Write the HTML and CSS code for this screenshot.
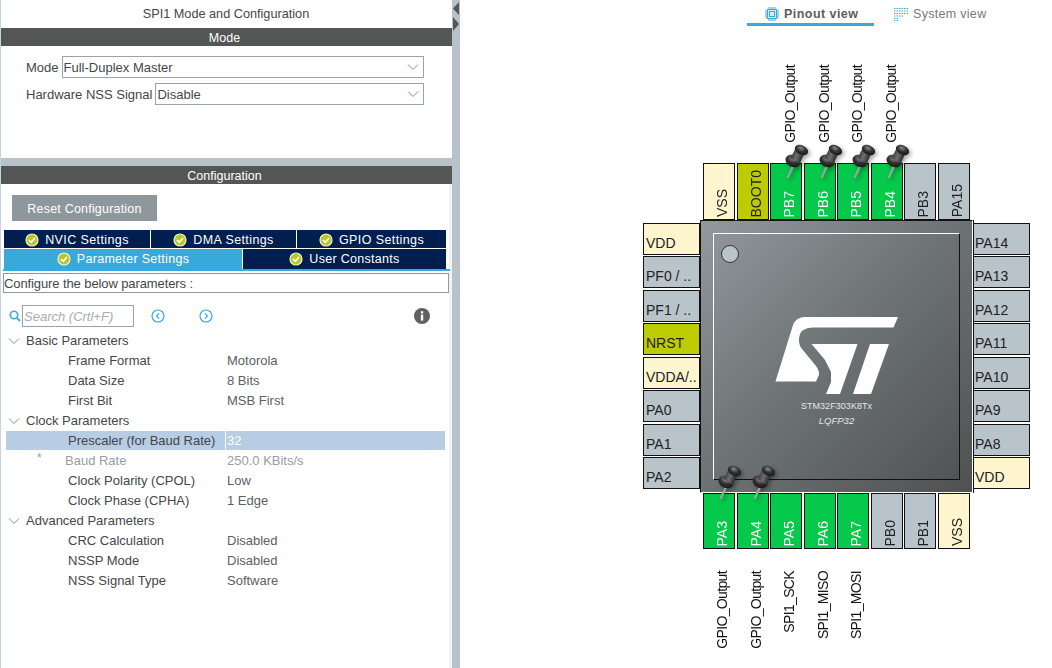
FILE: index.html
```html
<!DOCTYPE html>
<html lang="en">
<head>
    <meta charset="UTF-8">
    <title>SPI1 Mode and Configuration</title>
    <link rel="stylesheet" href="styles.css">
</head>
<body>
<svg class="defs" width="0" height="0">
    <defs>
        <radialGradient id="pinGrad" cx="0.4" cy="0.35" r="0.75">
            <stop offset="0" stop-color="#8c8c8c"/>
            <stop offset="0.45" stop-color="#333"/>
            <stop offset="1" stop-color="#111"/>
        </radialGradient>
        <linearGradient id="pinGrad2" x1="0" y1="0" x2="1" y2="0.4">
            <stop offset="0" stop-color="#1c1c1c"/>
            <stop offset="0.55" stop-color="#6e6e6e"/>
            <stop offset="1" stop-color="#1c1c1c"/>
        </linearGradient>
        <symbol id="pushpin" viewBox="0 0 24 34">
            <path d="M3 33 L8 22" stroke="#a0a0a0" stroke-width="2.2" stroke-linecap="round"/>
            <ellipse cx="8" cy="17" rx="7.8" ry="5.8" transform="rotate(27 8 17)" fill="url(#pinGrad)"/>
            <path d="M5.5 14 L11 3.5 L20 8 L14.5 20 Z" fill="url(#pinGrad2)"/>
            <ellipse cx="16.5" cy="6" rx="7" ry="4.6" transform="rotate(27 16.5 6)" fill="url(#pinGrad)"/>
        </symbol>
        <symbol id="check" viewBox="0 0 14 14">
            <circle cx="7" cy="7" r="6" fill="#b9c62a" stroke="#f2f4cf" stroke-width="1.2"/>
            <path d="M4 7 L6.3 9.3 L10 5" fill="none" stroke="#fff" stroke-width="1.7"/>
        </symbol>
        <symbol id="chevron" viewBox="0 0 12 8">
            <path d="M1 1.5 L6 6.5 L11 1.5" fill="none" stroke="#8a8f93" stroke-width="1"/>
        </symbol>
    </defs>
</svg>

<div class="left">
    <div class="panel-title">SPI1 Mode and Configuration</div>
    <div class="bar">Mode</div>
    <div class="mode-form">
        <div class="form-row">
            <label>Mode</label>
            <div class="select">Full-Duplex Master<svg class="select-arrow"><use href="#chevron"/></svg></div>
        </div>
        <div class="form-row">
            <label>Hardware NSS Signal</label>
            <div class="select">Disable<svg class="select-arrow"><use href="#chevron"/></svg></div>
        </div>
    </div>
    <div class="gap"></div>
    <div class="bar">Configuration</div>
    <div class="config">
        <button class="reset">Reset Configuration</button>
        <div class="tabs tabs-three">
            <div class="tab"><svg class="check"><use href="#check"/></svg>NVIC Settings</div>
            <div class="tab"><svg class="check"><use href="#check"/></svg>DMA Settings</div>
            <div class="tab"><svg class="check"><use href="#check"/></svg>GPIO Settings</div>
        </div>
        <div class="tabs tabs-two">
            <div class="tab active"><svg class="check"><use href="#check"/></svg>Parameter Settings</div>
            <div class="tab"><svg class="check"><use href="#check"/></svg>User Constants</div>
        </div>
        <div class="tab-line"></div>
        <div class="hint">Configure the below parameters :</div>
        <div class="search-row">
            <svg class="search-icon" viewBox="0 0 12 12"><circle cx="5" cy="5" r="3.7" fill="none" stroke="#39a9dc" stroke-width="1.6"/><path d="M7.8 7.8 L11 11" stroke="#39a9dc" stroke-width="1.8"/></svg>
            <div class="search-box">Search (Crtl+F)</div>
            <svg class="nav-icon nav-prev" viewBox="0 0 14 14"><circle cx="7" cy="7" r="6" fill="none" stroke="#39a9dc" stroke-width="1.2"/><path d="M8.2 4.3 L5.5 7 L8.2 9.7" fill="none" stroke="#39a9dc" stroke-width="1.2"/></svg>
            <svg class="nav-icon nav-next" viewBox="0 0 14 14"><circle cx="7" cy="7" r="6" fill="none" stroke="#39a9dc" stroke-width="1.2"/><path d="M5.8 4.3 L8.5 7 L5.8 9.7" fill="none" stroke="#39a9dc" stroke-width="1.2"/></svg>
            <svg class="info-icon" viewBox="0 0 16 16"><circle cx="8" cy="8" r="8" fill="#5f6162"/><rect x="6.9" y="6.6" width="2.3" height="6" fill="#fff"/><rect x="6.9" y="3.2" width="2.3" height="2.3" fill="#fff"/></svg>
        </div>
        <div class="tree">
            <div class="group"><svg class="group-arrow"><use href="#chevron"/></svg>Basic Parameters</div>
            <div class="row"><span class="name">Frame Format</span><span class="value">Motorola</span></div>
            <div class="row"><span class="name">Data Size</span><span class="value">8 Bits</span></div>
            <div class="row"><span class="name">First Bit</span><span class="value">MSB First</span></div>
            <div class="group"><svg class="group-arrow"><use href="#chevron"/></svg>Clock Parameters</div>
            <div class="row selected"><span class="name">Prescaler (for Baud Rate)</span><span class="value">32</span></div>
            <div class="row readonly"><span class="star">*</span><span class="name">Baud Rate</span><span class="value">250.0 KBits/s</span></div>
            <div class="row"><span class="name">Clock Polarity (CPOL)</span><span class="value">Low</span></div>
            <div class="row"><span class="name">Clock Phase (CPHA)</span><span class="value">1 Edge</span></div>
            <div class="group"><svg class="group-arrow"><use href="#chevron"/></svg>Advanced Parameters</div>
            <div class="row"><span class="name">CRC Calculation</span><span class="value">Disabled</span></div>
            <div class="row"><span class="name">NSSP Mode</span><span class="value">Disabled</span></div>
            <div class="row"><span class="name">NSS Signal Type</span><span class="value">Software</span></div>
        </div>
    </div>
</div>

<div class="divider">
    <svg class="divider-arrows" viewBox="0 0 8 32"><path d="M7 2 L1 8.5 L7 15 Z" fill="#555"/><path d="M1 17 L7 24 L1 31 Z" fill="#555"/></svg>
</div>

<div class="right">
    <div class="views">
        <div class="view current">
            <svg class="view-icon" viewBox="0 0 14 14"><rect x="2.5" y="2.5" width="9" height="9" fill="#d5ecf7" stroke="#39a9dc"/><rect x="4.5" y="4.5" width="5" height="5" fill="none" stroke="#39a9dc"/><path d="M4 0V2M6 0V2M8 0V2M10 0V2M4 12V14M6 12V14M8 12V14M10 12V14M0 4H2M0 6H2M0 8H2M0 10H2M12 4H14M12 6H14M12 8H14M12 10H14" stroke="#39a9dc" stroke-width="1"/></svg>
            Pinout view
        </div>
        <div class="view">
            <svg class="view-icon" viewBox="0 0 14 14"><path d="M0 1.5H4M5 1.5H9M10 1.5H14M0 4H4M5 4H9M10 4H14M0 6.5H4M5 6.5H9M10 6.5H14M0 9H4M5 9H9M0 11.5H4M0 13.5H4" stroke="#39a9dc" stroke-width="1" stroke-dasharray="1 0.5"/></svg>
            System view
        </div>
    </div>

    <div class="signals signals-top">
        <div class="signal"><span>GPIO_Output</span></div>
        <div class="signal"><span>GPIO_Output</span></div>
        <div class="signal"><span>GPIO_Output</span></div>
        <div class="signal"><span>GPIO_Output</span></div>
    </div>

    <div class="package">
        <div class="pins-top">
            <div class="pin vertical power"><span>VSS</span></div>
            <div class="pin vertical boot"><span>BOOT0</span></div>
            <div class="pin vertical used"><span>PB7</span><svg class="pushpin"><use href="#pushpin"/></svg></div>
            <div class="pin vertical used"><span>PB6</span><svg class="pushpin"><use href="#pushpin"/></svg></div>
            <div class="pin vertical used"><span>PB5</span><svg class="pushpin"><use href="#pushpin"/></svg></div>
            <div class="pin vertical used"><span>PB4</span><svg class="pushpin"><use href="#pushpin"/></svg></div>
            <div class="pin vertical"><span>PB3</span></div>
            <div class="pin vertical"><span>PA15</span></div>
        </div>
        <div class="pins-left">
            <div class="pin power"><span>VDD</span></div>
            <div class="pin"><span>PF0 / ..</span></div>
            <div class="pin"><span>PF1 / ..</span></div>
            <div class="pin boot"><span>NRST</span></div>
            <div class="pin power"><span>VDDA/..</span></div>
            <div class="pin"><span>PA0</span></div>
            <div class="pin"><span>PA1</span></div>
            <div class="pin"><span>PA2</span></div>
        </div>
        <div class="chip">
            <div class="chip-inner">
                <div class="dot"></div>
                <svg class="logo" viewBox="775 316 124 79">
                    <path d="M898 317 L893.5 327.5 L813 327.5 Q802 328 800 334 Q797 343 802 349 L816 366 Q821 373 818 377 L816 381.5 L775.5 381.5 L793 325 Q796 317.5 804 317 Z" fill="#fff"/>
                    <path d="M811.5 344 L857.5 344 L840 394 L826 394 L831 382 L831 372 L825 360 Z" fill="#fff"/>
                    <path d="M870 344 L889 344 L871 394 L853 394 Z" fill="#fff"/>
                </svg>
                <div class="part-name">STM32F303K8Tx</div>
                <div class="part-package">LQFP32</div>
            </div>
        </div>
        <div class="pins-right">
            <div class="pin"><span>PA14</span></div>
            <div class="pin"><span>PA13</span></div>
            <div class="pin"><span>PA12</span></div>
            <div class="pin"><span>PA11</span></div>
            <div class="pin"><span>PA10</span></div>
            <div class="pin"><span>PA9</span></div>
            <div class="pin"><span>PA8</span></div>
            <div class="pin power"><span>VDD</span></div>
        </div>
        <div class="pins-bottom">
            <div class="pin vertical used"><span>PA3</span><svg class="pushpin"><use href="#pushpin"/></svg></div>
            <div class="pin vertical used"><span>PA4</span><svg class="pushpin"><use href="#pushpin"/></svg></div>
            <div class="pin vertical used"><span>PA5</span></div>
            <div class="pin vertical used"><span>PA6</span></div>
            <div class="pin vertical used"><span>PA7</span></div>
            <div class="pin vertical"><span>PB0</span></div>
            <div class="pin vertical"><span>PB1</span></div>
            <div class="pin vertical power"><span>VSS</span></div>
        </div>
    </div>

    <div class="signals signals-bottom">
        <div class="signal"><span>GPIO_Output</span></div>
        <div class="signal"><span>GPIO_Output</span></div>
        <div class="signal"><span>SPI1_SCK</span></div>
        <div class="signal"><span>SPI1_MISO</span></div>
        <div class="signal"><span>SPI1_MOSI</span></div>
    </div>
</div>
</body>
</html>
```

FILE: styles.css
```css
html, body {
    margin: 0;
    height: 100%;
}

body {
    display: flex;
    overflow: hidden;
    background-color: white;
    font-family: "Liberation Sans", Arial, sans-serif;
    font-size: 13px;
    color: #44464a;
}

.defs {
    position: absolute;
}

/* left panel */
.left {
    width: 451px;
    flex: none;
    border-left: 1px solid #c6d3e0;
    display: flex;
    flex-direction: column;
}

.panel-title {
    height: 28px;
    line-height: 29px;
    text-align: center;
    font-size: 12.7px;
    padding-right: 1px;
}

.bar {
    height: 18px;
    line-height: 20px;
    flex: none;
    background-color: #545655;
    color: white;
    text-align: center;
    font-size: 12.5px;
    padding-right: 4px;
}

.mode-form {
    height: 112px;
    padding: 10px 28px 0 25px;
    box-sizing: border-box;
}

.form-row {
    display: flex;
    align-items: center;
    gap: 3px;
    margin-bottom: 5px;
}

.select {
    flex: 1;
    height: 22px;
    line-height: 21px;
    box-sizing: border-box;
    border: 1px solid #9aa3a8;
    padding-left: 1px;
    position: relative;
}

.select-arrow {
    position: absolute;
    right: 4px;
    top: 6px;
    width: 12px;
    height: 8px;
}

.gap {
    height: 8px;
    flex: none;
    background-color: #b7c2c9;
}

.config {
    flex: 1;
    display: flex;
    flex-direction: column;
    border-right: 3px solid #eff3f7;
}

.reset {
    width: 145px;
    height: 26px;
    margin: 11px 0 9px 11px;
    padding: 2px 0 0;
    border: none;
    background-color: #8e979c;
    color: white;
    font-family: inherit;
    font-size: 12.5px;
    letter-spacing: 0.2px;
}

.tabs {
    display: grid;
    gap: 1px;
    margin: 0 3px;
    width: 442px;
}

.tabs-three {
    grid-template-columns: 146px 145px 149px;
    height: 18px;
    margin-bottom: 1px;
}

.tabs-two {
    grid-template-columns: 238px 203px;
    height: 20px;
}

.tab {
    background-color: #001f4f;
    color: white;
    display: flex;
    align-items: center;
    justify-content: center;
    gap: 6px;
    font-size: 12.5px;
    letter-spacing: 0.4px;
    padding-top: 1px;
    box-sizing: border-box;
}

.tabs-two .tab {
    letter-spacing: 0.3px;
    padding-top: 0;
}

.tab.active {
    background-color: #39a9dc;
}

.check {
    width: 14px;
    height: 14px;
}

.tab-line {
    height: 2px;
    margin: 0 -1px 0 2px;
    background-color: #39a9dc;
}

.hint {
    height: 20px;
    line-height: 19px;
    box-sizing: border-box;
    margin: 2px 0 0 2px;
    border: 1px solid #8f9aa0;
    letter-spacing: -0.1px;
}

.search-row {
    height: 37px;
    display: flex;
    align-items: center;
    padding-top: 9px;
    box-sizing: border-box;
    flex: none;
}

.search-icon {
    width: 12px;
    height: 12px;
    margin: 0 1px 0 8px;
}

.search-box {
    width: 112px;
    height: 22px;
    line-height: 21px;
    box-sizing: border-box;
    border: 1px solid #9aa3a8;
    padding-left: 1px;
    color: #a9adb0;
    font-style: italic;
}

.nav-icon {
    width: 14px;
    height: 14px;
}

.nav-prev {
    margin-left: 17px;
}

.nav-next {
    margin-left: 34px;
}

.info-icon {
    width: 16px;
    height: 16px;
    margin-left: 201px;
}

.tree {
    padding-left: 5px;
    width: 439px;
}

.group {
    height: 20px;
    line-height: 21px;
    padding-left: 20px;
    position: relative;
}

.group-arrow {
    position: absolute;
    left: 2px;
    top: 7px;
    width: 12px;
    height: 8px;
}

.row {
    height: 20px;
    line-height: 21px;
    display: flex;
    position: relative;
}

.name {
    width: 157px;
    margin-left: 62px;
}

.value {
    padding-left: 2px;
    flex: 1;
    color: #5c6064;
}

.selected {
    height: 19px;
    margin: 1px 0 0;
    line-height: 19px;
    background-color: #b7cde4;
}

.selected .value {
    color: white;
    border-left: 1px solid white;
    padding-left: 1px;
}

.readonly .name {
    margin-left: 59px;
    width: 160px;
    color: #9a9da0;
}

.readonly .value {
    color: #9a9da0;
}

.star {
    position: absolute;
    left: 31px;
    top: -2px;
    color: #9a9da0;
    font-size: 12px;
}

/* divider */
.divider {
    width: 8px;
    flex: none;
    background-color: #b7c2c9;
}

.divider-arrows {
    display: block;
    width: 8px;
    height: 32px;
}

/* pinout */
.right {
    flex: 1;
    min-width: 0;
}

.views {
    display: flex;
    height: 26px;
    margin-left: 287px;
}

.view {
    display: flex;
    align-items: flex-start;
    gap: 5px;
    padding-top: 7px;
    box-sizing: border-box;
    height: 26px;
    line-height: 15px;
    color: #77797c;
    font-size: 12.5px;
    letter-spacing: 0.3px;
    margin-left: 20px;
}

.view.current {
    width: 127px;
    margin-left: 0;
    padding-left: 18px;
    color: #5b5d60;
    font-weight: bold;
    border-bottom: 3px solid #39a9dc;
    letter-spacing: 0.45px;
}

.view-icon {
    width: 14px;
    height: 14px;
    flex: none;
}

.signals {
    display: flex;
    color: #111;
    font-size: 14px;
    letter-spacing: -0.65px;
}

.signal span {
    display: block;
    writing-mode: vertical-rl;
    transform: rotate(180deg);
    line-height: 16px;
    white-space: nowrap;
}

.signals-top {
    height: 78px;
    margin: 39px 0 20px 322px;
    gap: 17.5px;
    align-items: flex-end;
}

.signals-bottom {
    margin: 22px 0 0 254px;
    gap: 17.6px;
    align-items: flex-start;
}

.package {
    display: grid;
    grid-template-columns: 57px 273px 57px;
    grid-template-rows: 57px 273px 56px;
    width: 387px;
    margin-left: 183px;
}

.pins-top, .pins-bottom {
    grid-column: 2;
    display: flex;
    justify-content: space-between;
    padding: 0 3px;
}

.pins-left, .pins-right {
    grid-row: 2;
    display: flex;
    flex-direction: column;
    justify-content: space-between;
    padding: 3px 0 4px;
}

.pins-left {
    grid-column: 1;
}

.pins-right {
    grid-column: 3;
}

.pins-right .pin {
    padding-left: 1px;
}

.pins-bottom {
    grid-row: 3;
}

.pin {
    position: relative;
    box-sizing: border-box;
    border: 1px solid #111;
    background-color: #b9c4ca;
    color: #222;
    font-size: 14px;
    line-height: 16px;
    display: flex;
    align-items: flex-end;
    height: 32px;
    padding: 0 0 3px 2px;
    white-space: nowrap;
    overflow: visible;
}

.pin.vertical {
    height: 100%;
    width: 32px;
    padding: 0 0 2px 10px;
}

.pin.vertical span {
    writing-mode: vertical-rl;
    transform: rotate(180deg);
}

.pin.power {
    background-color: #fff5cf;
}

.pin.boot {
    background-color: #bdcc00;
}

.pin.used {
    background-color: #04c94a;
    color: white;
}

.pushpin {
    position: absolute;
    left: 14px;
    top: -20px;
    width: 24px;
    height: 34px;
    z-index: 2;
    filter: drop-shadow(2px 2px 2px rgba(0, 0, 0, 0.35));
}

.pins-bottom .pushpin {
    top: -29px;
}

.chip {
    grid-row: 2;
    grid-column: 2;
    box-sizing: border-box;
    border: 1px solid;
    border-color: #111 #fff #fff #111;
    box-shadow: 1px 0 0 #111;
    background: linear-gradient(135deg, #92989b 0%, #6c7274 50%, #4f5151 100%);
    padding: 12px;
}

.chip-inner {
    position: relative;
    height: 247px;
    box-sizing: border-box;
    border: 1px solid;
    border-color: #fff #111 #111 #fff;
    display: flex;
    flex-direction: column;
    align-items: center;
    padding-top: 82px;
}

.dot {
    position: absolute;
    left: 7px;
    top: 11px;
    width: 18px;
    height: 18px;
    box-sizing: border-box;
    border-radius: 50%;
    border: 1.5px solid #333;
    background-color: #b9c4ca;
}

.logo {
    width: 124px;
    height: 79px;
    flex: none;
}

.part-name {
    margin-top: 5px;
    color: #e4e6e6;
    font-size: 9px;
    letter-spacing: 0.05px;
    line-height: 12px;
}

.part-package {
    margin-top: 3px;
    color: #e4e6e6;
    font-size: 9.5px;
    font-style: italic;
    line-height: 12px;
}
```
